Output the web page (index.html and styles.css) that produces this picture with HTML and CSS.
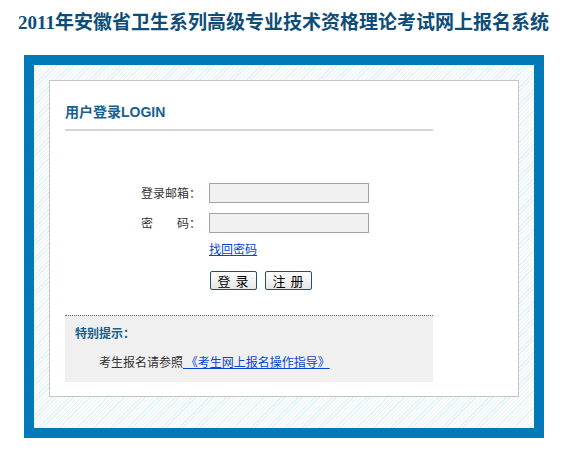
FILE: index.html
```html
<!DOCTYPE html>
<html lang="zh-CN">
<head>
<meta charset="utf-8">
<title>2011年安徽省卫生系列高级专业技术资格理论考试网上报名系统</title>
<link rel="stylesheet" href="styles.css">
</head>
<body>
<h1 class="site-title">2011年安徽省卫生系列高级专业技术资格理论考试网上报名系统</h1>
<div class="frame">
  <div class="panel">
    <h2 class="panel-title">用户登录<span class="latin">LOGIN</span></h2>
    <form class="login-form">
      <label class="label" for="email">登录邮箱：</label>
      <input class="field" id="email" type="text">
      <label class="label" for="pwd">密　　码：</label>
      <input class="field" id="pwd" type="password">
      <div class="cell"><a class="link" href="#">找回密码</a></div>
      <div class="cell buttons">
        <button class="btn" type="button">登 录</button>
        <button class="btn" type="button">注 册</button>
      </div>
    </form>
    <div class="notice">
      <div class="notice-title">特别提示：</div>
      <p class="notice-text">考生报名请参照<a class="link" href="#"> 《考生网上报名操作指导》</a></p>
    </div>
  </div>
</div>
</body>
</html>
```

FILE: styles.css
```css
html, body {
  margin: 0;
  padding: 0;
  background: #fff;
}

body {
  width: 567px;
  font-family: "Noto Sans CJK SC", "Liberation Sans", sans-serif;
  font-size: 12px;
  color: #333;
}

.site-title {
  margin: 0;
  padding: 11px 0 20px;
  line-height: 24px;
  font-size: 19px;
  font-weight: bold;
  text-align: center;
  color: #0e4d78;
  font-family: "Liberation Serif", "Noto Sans CJK SC", serif;
  white-space: nowrap;
}

.frame {
  width: 470px;
  margin-left: 24px;
  border: 10px solid #0079b8;
  padding: 15px 15px 31px;
  background-color: #fff;
  background-image: repeating-linear-gradient(-45deg, #fff 0 2px, #dcf1fa 2px 3px);
}

.panel {
  height: 315px;
  border: 1px solid #c4c4c4;
  background: #fff;
  padding: 0 15px;
}

.panel-title {
  width: 368px;
  margin: 0;
  padding: 21px 0 8px;
  line-height: 18px;
  font-size: 14px;
  font-weight: bold;
  color: #16608f;
  border-bottom: 2px solid #d6d6d6;
}

.latin {
  font-family: "Liberation Sans", Arial, sans-serif;
}

.login-form {
  display: grid;
  grid-template-columns: 136px 160px;
  column-gap: 8px;
  row-gap: 10px;
  margin-top: 52px;
}

.label {
  text-align: right;
  line-height: 20px;
  height: 20px;
  color: #333;
  white-space: nowrap;
}

.field {
  box-sizing: border-box;
  display: block;
  width: 160px;
  height: 20px;
  margin: 0;
  border: 1px solid #a3a3a3;
  background: #f1f1f1;
  padding: 0 3px;
  font-size: 12px;
}

.cell {
  grid-column: 2;
}

.cell:first-of-type {
  margin-top: -2px;
  line-height: 16px;
}

.link {
  color: #0645d6;
  text-decoration: underline;
}

.buttons {
  display: flex;
  gap: 8px;
  margin-top: 4px;
  padding-left: 1px;
}

.btn {
  box-sizing: border-box;
  width: 47px;
  height: 19px;
  margin: 0;
  padding: 0;
  border: 1px solid #294c6a;
  border-radius: 2px;
  background: linear-gradient(#ffffff, #e6e6e6);
  font-family: "Noto Sans CJK SC", sans-serif;
  font-size: 13px;
  line-height: 17px;
  color: #000;
  letter-spacing: 1px;
}

.notice {
  width: 368px;
  margin-top: 25px;
  box-sizing: border-box;
  height: 67px;
  border-top: 1px dotted #666;
  background: #f0f0f0;
  padding: 8px 10px 0;
}

.notice-title {
  line-height: 18px;
  font-weight: bold;
  color: #16608f;
}

.notice-text {
  margin: 11px 0 0;
  line-height: 18px;
  text-indent: 24px;
  color: #333;
  white-space: nowrap;
}
```
